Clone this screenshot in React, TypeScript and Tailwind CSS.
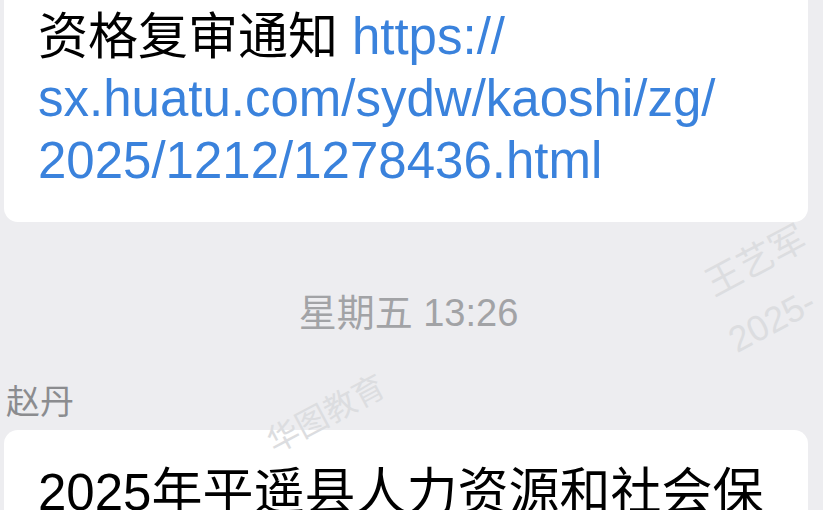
const font = { fontFamily: '"Liberation Sans", "Noto Sans CJK SC", sans-serif' };

function Watermark({ text, className }: { text: string; className: string }) {
  return (
    <div
      className={"pointer-events-none absolute select-none whitespace-nowrap text-[#dcdde0] -rotate-[28deg] " + className}
    >
      {text}
    </div>
  );
}

export default function App() {
  return (
    <div className="relative h-[510px] w-[823px] overflow-hidden bg-[#ededf0]" style={font}>
      <div className="flex flex-col">
        {/* previous bubble, top cut off */}
        <div className="ml-[4px] w-[804px] rounded-b-[14px] bg-white pb-[30px] pl-[34px] pt-[6px] text-[50px] leading-[62px] text-black">
          资格复审通知 <span className="text-[51px] text-[#3a82dc]">https://</span>
          <br />
          <span className="text-[51px] text-[#3a82dc]">sx.huatu.com/sydw/kaoshi/zg/</span>
          <br />
          <span className="text-[51px] text-[#3a82dc]">2025/1212/1278436.html</span>
        </div>

        <div className="mt-[71px] h-[40px] pr-[6px] text-center text-[38px] leading-[40px] text-[#a2a3a6]">
          星期五 13:26
        </div>

        <div className="ml-[6px] mt-[49px] h-[40px] text-[34px] leading-[40px] text-[#8b8c8f]">赵丹</div>

        <div className="ml-[4px] mt-[8px] w-[804px] rounded-[14px] bg-white pl-[34px] pt-[32px] text-[51px] leading-[62px] text-black">
          2025年平遥县人力资源和社会保
        </div>
      </div>

      <Watermark text="王艺军" className="left-[702px] top-[234px] text-[36px]" />
      <Watermark text="2025-" className="left-[726px] top-[294px] text-[36px]" />
      <Watermark text="华图教育" className="left-[262px] top-[390px] text-[32px]" />
    </div>
  );
}
